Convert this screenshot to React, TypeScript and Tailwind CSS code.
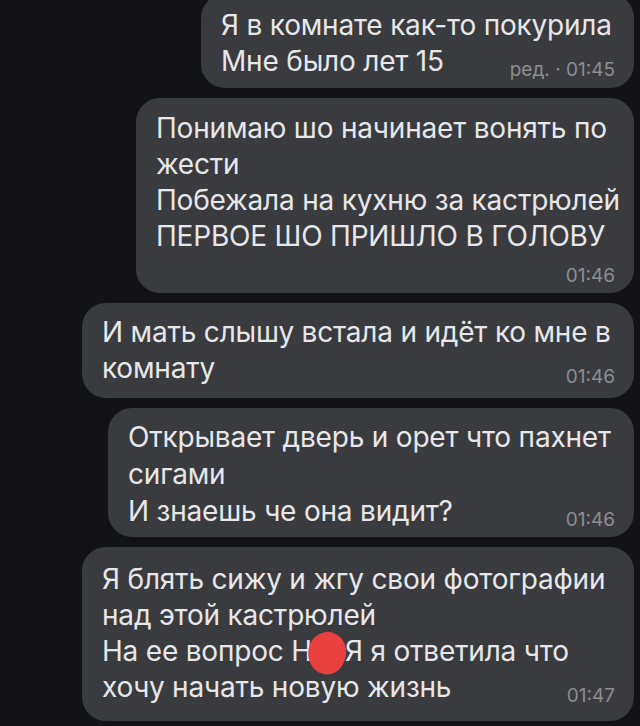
const font = { fontFamily: 'Inter, "Noto Sans", "Liberation Sans", sans-serif' }

type Line = string | React.ReactNode

function Bubble({
  width,
  lines,
  time,
  timeOwnRow = false,
  className = '',
}: {
  width: string
  lines: Line[]
  time: string
  timeOwnRow?: boolean
  className?: string
}) {
  const last = lines.length - 1
  return (
    <div
      className={`${width} ${className} rounded-[24px] bg-[#3a3b3f] pl-5 pr-[19px] text-[28px] tracking-[-0.2px] text-[#e7e7e9]`}
    >
      {lines.map((line, i) =>
        i === last && !timeOwnRow ? (
          <div className="flex items-baseline justify-between whitespace-nowrap" key={i}>
            <span>{line}</span>
            <span className="translate-y-[5px] text-[19px] leading-none tracking-normal text-[#8c8d92]">
              {time}
            </span>
          </div>
        ) : (
          <div className="whitespace-nowrap" key={i}>
            {line}
          </div>
        ),
      )}
      {timeOwnRow && (
        <div className="mt-[9px] flex justify-end text-[19px] leading-[26px] tracking-normal text-[#8c8d92]">
          {time}
        </div>
      )}
    </div>
  )
}

export default function App() {
  return (
    <div
      className="flex h-[726px] w-[640px] flex-col items-end gap-[10px] overflow-hidden bg-[#131317] pr-[6px]"
      style={font}
    >
      <Bubble
        className="-mt-[6px] pb-[9px] pt-[13px] leading-[36px]"
        lines={['Я в комнате как-то покурила', 'Мне было лет 15']}
        time="ред. · 01:45"
        width="w-[433px]"
      />
      <Bubble
        className="pb-[4px] pt-[12px] leading-[36px]"
        lines={[
          'Понимаю шо начинает вонять по',
          'жести',
          'Побежала на кухню за кастрюлей',
          'ПЕРВОЕ ШО ПРИШЛО В ГОЛОВУ',
        ]}
        time="01:46"
        timeOwnRow
        width="w-[498px]"
      />
      <Bubble
        className="pb-[12px] pt-[11px] leading-[36px]"
        lines={['И мать слышу встала и идёт ко мне в', 'комнату']}
        time="01:46"
        width="w-[552px]"
      />
      <Bubble
        className="pb-[7px] pt-[11px] leading-[37px]"
        lines={['Открывает дверь и орет что пахнет', 'сигами', 'И знаешь че она видит?']}
        time="01:46"
        width="w-[526px]"
      />
      <Bubble
        className="pb-[16px] pt-[14px] leading-[36px]"
        lines={[
          'Я блять сижу и жгу свои фотографии',
          'над этой кастрюлей',
          <>
            На ее вопрос НА
            <span className="relative inline-block w-[14px]">
              <span className="absolute -left-[23px] -top-[29px] h-[42px] w-[38px] rotate-[20deg] rounded-[48%_52%_45%_55%] bg-[#e8403f]" />
            </span>
            Я я ответила что
          </>,
          'хочу начать новую жизнь',
        ]}
        time="01:47"
        width="w-[552px]"
      />
    </div>
  )
}
